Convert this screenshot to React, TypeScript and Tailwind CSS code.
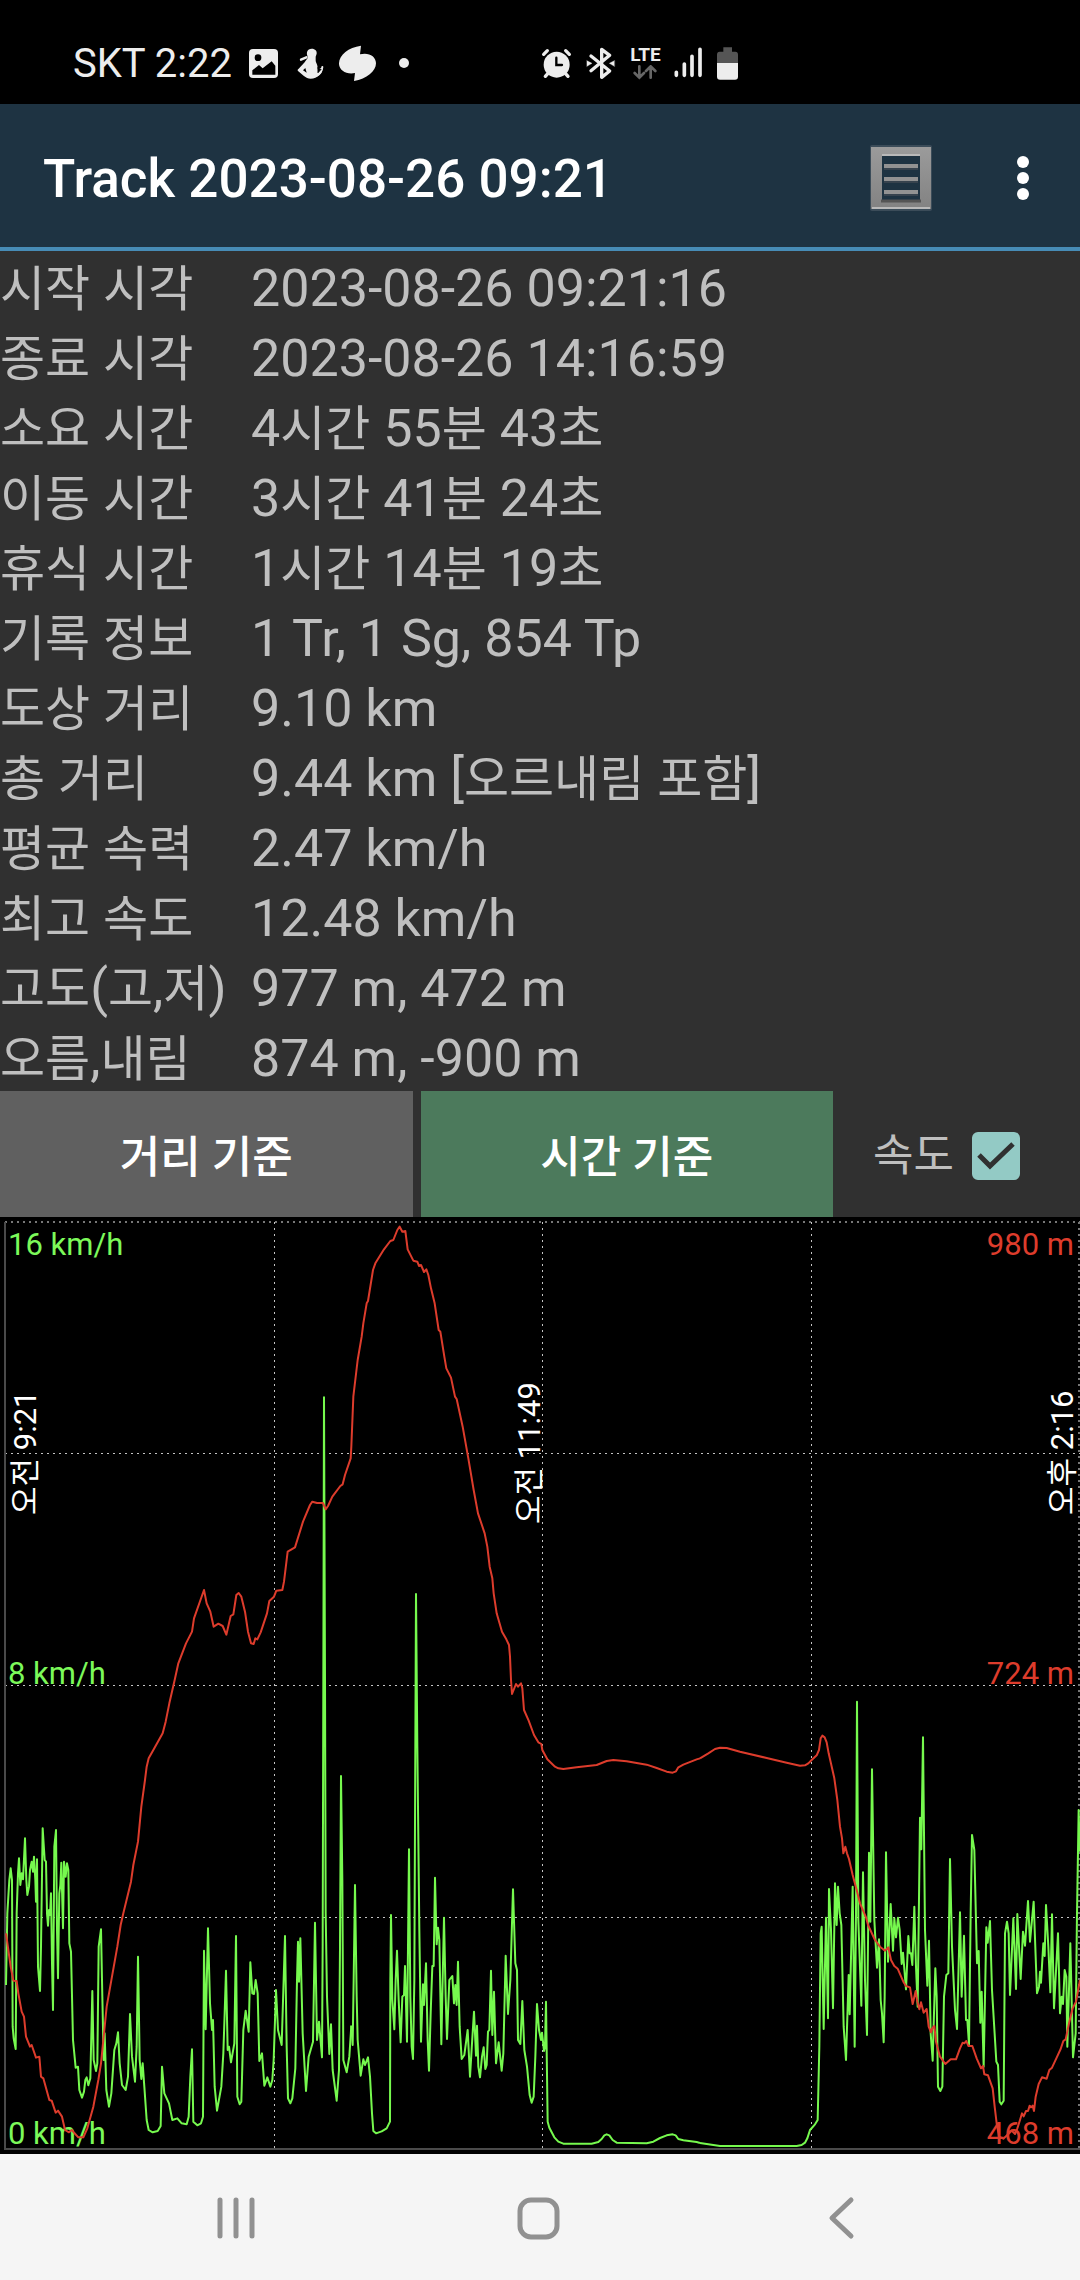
import { useState } from "react";

const stats: [string, string][] = [
    ["시작 시각", "2023-08-26 09:21:16"],
    ["종료 시각", "2023-08-26 14:16:59"],
    ["소요 시간", "4시간 55분 43초"],
    ["이동 시간", "3시간 41분 24초"],
    ["휴식 시간", "1시간 14분 19초"],
    ["기록 정보", "1 Tr, 1 Sg, 854 Tp"],
    ["도상 거리", "9.10 km"],
    ["총 거리", "9.44 km [오르내림 포함]"],
    ["평균 속력", "2.47 km/h"],
    ["최고 속도", "12.48 km/h"],
    ["고도(고,저)", "977 m, 472 m"],
    ["오름,내림", "874 m, -900 m"],
];

// Each stretch of a trace starts at its own x; units are a third of a pixel
const speed = [
    {
        x: 0,
        points:
            "18,915 22,700 28,600 32,565 36,600 38,1040 41,1075 47,1107 50,700 54,580 57,535 61,615 65,580 69,598 75,475 79,600 82,645 87,620 90,570 95,545 99,575 102,530 106,600 108,665 111,538 114,860 120,933 123,800 128,445 134,540 138,545 141,700 144,737 147,690 150,705 153,640 156,850 159,990 163,500 168,450 171,750 174,895 178,640 181,615 184,548 189,745 192,545 197,590 201,550 205,570 208,790 213,815 219,1080 227,1163 234,1160 238,1230 246,1253 252,1235 256,1200 260,1192 265,1216 271,1195 277,933 281,1140 288,1173 292,1150 296,800 303,748 307,950 311,1140 314,1060 319,1230 327,1280 334,1240 343,1110 349,1090 354,1057 359,1150 366,1215 377,1230 384,1190 390,1002 396,1130 405,1205 410,1100 414,830 419,1140 424,1197 428,1150 433,1220 440,1320 446,1350 458,1357 473,1353 482,1338 486,1160 493,1240 507,1270 517,1320 532,1315 545,1330 560,1333 566,1310 571,1190 576,1108 580,1325 592,1336 603,1330 609,1310 612,812 617,1048 624,745 630,970 636,1050 639,1020 644,1220 651,1292 664,1220 670,1120 674,1000 678,872 683,1110 687,1100 693,1147 703,1090 708,768 712,1250 719,1273 724,1265 730,1050 737,992 746,1055 751,847 757,940 762,942 767,900 773,940 778,1143 786,1120 793,1217 802,1192 811,1220 817,1200 821,1140 828,930 834,1050 845,1095 855,768 860,1100 864,1255 871,1270 877,1255 886,1165 891,900 894,785 897,905 901,775 908,1060 918,1233 926,1130 939,1085 945,728 951,1080 957,1025 966,1132 968,800 970,0 972,-848 975,0 977,700 981,950 988,1122 993,1033 998,1170 1010,1262 1017,1170 1020,800 1023,288 1027,600 1030,1140 1040,1177 1048,1130 1054,1037",
    },
    {
        x: 1050,
        points:
            "4,1037 8,1095 11,900 15,615 20,950 23,1080 32,1187 40,1138 45,1155 54,1132 60,1190 66,1300 70,1353 78,1360 95,1354 110,1345 120,1325 121,900 123,705 127,960 133,1048 137,900 141,812 146,960 152,1087 157,950 162,945 165,858 171,1085 174,800 177,508 181,950 185,1100 189,1137 193,900 196,200 198,-258 202,200 208,750 213,1085 219,913 222,975 228,850 233,1080 237,1172 242,1000 247,858 251,858 255,593 260,793 264,743 268,780 274,1093 279,850 282,713 287,950 291,1077 298,900 307,888 312,970 316,915 320,975 324,845 329,1040 335,1137 343,1125 353,1050 360,1190 366,1090 372,995 378,1127 381,1037 385,1160 390,1192 396,1130 401,1102 406,1167 410,1155 414,1055 418,1050 423,872 427,1065 432,935 438,1150 446,1087 455,1172 460,1120 467,827 474,1002 481,900 489,628 496,850 501,870 504,1080 511,1092 517,963 523,1110 531,1160 539,1245 545,1268 551,1250 556,1130 561,972 567,1050 573,1080 576,1058 582,1113 585,1100 588,965 593,1325 598,1343 613,1372 625,1385 640,1391 725,1391 745,1386 755,1377 763,1366 770,1363 778,1366 788,1380 800,1388 890,1390 910,1385 930,1374 950,1366 968,1363 977,1366 985,1377 1000,1381 1040,1386 1050,1389",
    },
    {
        x: 2100,
        points:
            "0,1389 60,1398 290,1398 305,1395 315,1388 322,1375 330,1350 345,1333 353,1320 358,1100 362,760 365,740 371,1047 378,713 384,1015 387,627 393,750 399,985 405,610 410,735 414,620 419,700 424,735 431,1040 438,1140 446,885 449,1003 458,620 464,1100 468,700 471,65 475,720 484,977 489,577 495,900 501,1065 507,518 511,725 516,268 523,720 531,863 537,778 542,960 546,1000 551,1087 554,950 558,517 564,845 572,672 579,812 583,715 588,772 594,713 599,750 605,852 609,818 618,928 625,768 629,820 633,820 637,855 643,680 648,860 653,980 660,413 664,508 669,172 675,750 682,917 687,782 692,1060 698,1142 702,1000 706,865 710,950 714,1220 721,1233 727,1220 732,950 739,885 745,880 750,537 756,800 765,990 771,1047 780,697 785,950 792,767 798,1020 802,1020 807,1093 812,700 816,465 823,510 831,850 836,813 841,1028 845,935 851,1160 859,742 863,788 870,723 876,930 889,1145 894,1155 899,1265 904,1273 911,1262 915,760 921,725 926,760 930,945 940,715 948,927 952,702 962,897 969,755 975,797 984,663 990,785 1001,665 1011,940 1017,920 1020,875 1023,908 1030,790 1034,828 1038,675 1045,800 1051,937 1056,703 1062,985 1074,760 1080,1000 1085,950 1089,972 1094,870 1099,890 1102,1100 1111,790 1119,1132 1127,1060 1131,700 1136,390 1139,515",
    },
];

const altitude = [
    {
        x: 0,
        points:
            "18,760 25,810 32,860 40,902 50,903 55,940 65,995 72,1010 78,1070 90,1100 95,1095 108,1133 118,1130 123,1190 130,1195 148,1260 155,1262 167,1298 174,1292 186,1310 195,1350 207,1357 215,1350 235,1372 250,1372 262,1345 280,1280 295,1200 303,1150 312,1060 320,980 335,895 352,800 362,735 370,700 393,605 400,555 414,485 424,380 435,300 440,260 446,235 460,210 488,160 497,125 508,70 524,0 535,-50 558,-110 576,-145 582,-185 612,-270 620,-230 631,-205 641,-160 655,-169 668,-162 679,-136 692,-192 700,-197 709,-255 716,-261 724,-250 735,-205 744,-145 753,-110 761,-108 766,-125 772,-122 782,-143 801,-200 808,-237 822,-250 829,-268 847,-270 852,-295 863,-385 885,-398 909,-475 930,-525 937,-535 951,-531 969,-531 977,-512 984,-522 997,-550 1021,-582 1028,-587 1035,-615 1052,-665 1054,-700 1060,-850 1073,-960 1085,-1030 1090,-1070 1100,-1130 1104,-1137 1119,-1230 1126,-1250 1152,-1292 1171,-1317 1180,-1320 1192,-1350 1199,-1360 1207,-1345 1216,-1347 1223,-1292 1240,-1258 1252,-1255 1257,-1242 1263,-1245 1272,-1224 1279,-1232 1285,-1215 1293,-1175 1304,-1130 1316,-1050 1321,-1045 1333,-970 1339,-935 1353,-907 1365,-850 1370,-843 1388,-760 1405,-665 1421,-570 1434,-500 1454,-440 1462,-400 1469,-340 1477,-305 1481,-260 1490,-200 1506,-145 1519,-122 1527,-105 1530,-70 1533,0",
    },
    {
        x: 1050,
        points:
            "483,0 486,42 498,12 504,20 513,10 517,25 522,90 536,122 552,165 565,187 574,192 577,210 592,238 615,260 625,265 640,267 680,262 740,255 755,249 770,243 790,240 830,244 890,254 920,264 950,275 968,278 978,274 985,262 1000,254 1040,238 1050,235",
    },
    {
        x: 2100,
        points:
            "0,235 25,220 45,207 60,203 80,204 120,215 200,234 260,248 300,257 315,256 325,250 335,240 350,226 357,210 362,175 367,167 374,172 380,187 386,220 403,295 412,360 420,440 426,475 430,520 436,500 441,520 447,537 458,585 470,630 480,670 498,712 504,735 525,780 540,800 555,812 565,802 573,840 583,858 593,866 610,905 618,918 630,922 638,972 647,933 652,965 658,988 663,967 671,998 680,987 686,1040 693,1057 697,1045 703,1038 708,1085 720,1130 736,1152 752,1138 768,1138 780,1105 788,1088 793,1090 799,1083 805,1098 817,1098 830,1135 843,1165 849,1158 853,1183 864,1186 878,1225 884,1280 890,1330 897,1370 910,1376 925,1362 935,1352 945,1362 952,1345 960,1320 966,1300 971,1309 978,1293 984,1293 989,1277 993,1282 998,1277 1002,1293 1007,1250 1016,1212 1026,1192 1040,1196 1048,1170 1056,1163 1070,1133 1082,1107 1090,1083 1097,1078 1107,1030 1118,985 1128,965 1140,900",
    },
];

// Hangul is set a little smaller than the digits beside it
function Mixed({ text }: { text: string }) {
    return (
        <>
            {text.split(/([가-힣]+)/).map((part, i) =>
                i % 2 ? (
                    <span key={i} className="text-[49px]">
                        {part}
                    </span>
                ) : (
                    part
                )
            )}
        </>
    );
}

function StatusBar() {
    return (
        <div className="flex h-[104px] items-center bg-black pt-[23px] pl-[73px] text-[#ededed]">
            <div className="flex items-center gap-3">
                <span className="text-[40px] leading-none whitespace-nowrap">SKT 2:22</span>
                <svg className="h-[37px] w-[39px]" viewBox="36 45 117 111">
                    <rect x="51" y="57" width="87" height="87" rx="12" fill="currentColor" />
                    <circle cx="78" cy="83" r="10" fill="#000" />
                    <path d="M61 134V121L81 105L92 115L119 94L130 107V134Z" fill="#000" />
                </svg>
                <svg className="h-[37px] w-8" viewBox="189 45 96 111" fill="none" stroke="currentColor" strokeLinecap="round">
                    <path d="M239 56c11 0 16 7 15 15l-3 9v11c0 9 7 12 6 27l13-5c5 14-14 33-34 33-15 0-26-14-38-23-2-3-1-5 2-7l18-19c3-7 8-9 9-14l-1-6c-3-9-1-21 13-21z" fill="currentColor" stroke="none" />
                    <path d="M207 89l16-7" strokeWidth="7" />
                    <path d="M271 111c-1 14-8 22-17 26" strokeWidth="6" />
                    <path d="M213 121l7-7 4 14z" fill="#000" stroke="none" />
                    <path d="M258 112v16l9-10" fill="#000" stroke="#000" strokeWidth="3" />
                </svg>
                <svg className="h-[37px] w-[37px]" viewBox="321 45 111 111" fill="currentColor">
                    <path d="M387 47C348 52 320 77 321 102c1 20 23 32 48 27l-3 24c38-5 66-30 66-53 0-22-23-34-48-27z" />
                </svg>
                <svg className="h-[37px] w-8" viewBox="468 45 96 111" fill="currentColor">
                    <circle cx="516" cy="99" r="15" />
                </svg>
            </div>
            <div className="ml-[121px] flex items-center gap-3">
                <svg className="h-[37px] w-[31px]" viewBox="57 45 93 111" fill="none" stroke="currentColor" strokeLinecap="round">
                    <circle cx="104" cy="104" r="39" fill="currentColor" stroke="none" />
                    <path d="M65 73l11-11M142 73l-11-11" strokeWidth="10" />
                    <path d="M78 130l-8 9M130 130l8 9" strokeWidth="10" />
                    <path d="M103 83v22h17" stroke="#000" strokeWidth="7" />
                </svg>
                <svg className="h-[37px] w-[33px]" viewBox="186 45 99 111" fill="none" stroke="currentColor" strokeWidth="10" strokeLinecap="round" strokeLinejoin="round">
                    <path d="M207 78l56 45-24 19V58l24 18-56 46" />
                    <path d="M195 92l15 8-15 9zM277 92l-15 8 15 9z" fill="currentColor" strokeWidth="1" />
                </svg>
                <div className="flex h-[37px] w-[33px] flex-col items-center">
                    <span className="text-[19px] leading-5 font-bold">LTE</span>
                    <svg className="h-[15px] w-[24px]" viewBox="0 0 72 45" fill="none" stroke="#666" strokeWidth="8" strokeLinecap="round">
                        <path d="M19 4v34M5 24l14 14 14-14M53 38V4M39 18L53 4l14 14" />
                    </svg>
                </div>
                <svg className="h-[37px] w-[29px]" viewBox="456 45 87 111" fill="none" stroke="currentColor" strokeWidth="11" strokeLinecap="round">
                    <path d="M463 127v9M487 102v34M510 79v57M534 58v78" />
                </svg>
                <svg className="h-[37px] w-[25px]" viewBox="579 45 75 111">
                    <path d="M604 52h26v13h10q8 0 8 9v26h-63V74q0-9 8-9h11z" fill="#555" />
                    <path d="M585 99h63v41q0 9-9 9h-45q-9 0-9-9z" fill="currentColor" />
                </svg>
            </div>
        </div>
    );
}

function Header() {
    return (
        <header className="flex h-[147px] items-center border-b-4 border-[#478cb6] bg-[#1e3342] pt-1 pr-[33px] pl-[43px]">
            <h1 className="flex-1 pt-1 text-[53px] leading-none font-medium whitespace-nowrap text-white">
                Track 2023-08-26 09:21
            </h1>
            <button type="button" aria-label="목록" className="mr-[66px]">
                <svg className="h-[68px] w-16" viewBox="0 0 64 68" fill="none">
                    <defs>
                        <linearGradient id="frame" x1="0" y1="0" x2="0" y2="1">
                            <stop offset="0" stopColor="#9b9b9b" />
                            <stop offset="1" stopColor="#828282" />
                        </linearGradient>
                    </defs>
                    <rect x="1" y="1" width="62" height="66" rx="2" fill="#3b4c59" />
                    <path d="M2 3h60v62H2zM13 12v44h38V12z" fill="url(#frame)" fillRule="evenodd" />
                    <path d="M13 12h38v44H13z" fill="#1e3342" />
                    <path d="M13 11h38M3 64h58" stroke="#b9b9b9" strokeWidth="2" />
                    <path d="M12 57h40" stroke="#555" strokeWidth="3" />
                    <path d="M15 22h34M15 35h34M15 48h34" stroke="#929292" strokeWidth="4" />
                    <path d="M15 25h34M15 38h34M15 51h34" stroke="#50555a" strokeWidth="1" />
                </svg>
            </button>
            <button type="button" aria-label="더보기">
                <svg className="h-12 w-12" viewBox="0 0 48 48" fill="#fff">
                    <circle cx="24" cy="8" r="6" />
                    <circle cx="24" cy="24" r="6" />
                    <circle cx="24" cy="40" r="6" />
                </svg>
            </button>
        </header>
    );
}

function Chart({ showSpeed }: { showSpeed: boolean }) {
    return (
        <svg className="block w-full bg-black" viewBox="0 0 1080 937" fontSize="31">
            {/* grid */}
            <g stroke="#c4c4c4" strokeWidth="1" strokeDasharray="2 4" fill="none">
                <path d="M5 5H1080" stroke="#777" strokeWidth="2" />
                <path d="M5 236.5H1080M5 468.5H1080M5 700.5H1080" />
                <path d="M274.5 5V932M542.5 5V932M811.5 5V932" />
                <path d="M1079 5V932" stroke="#777" strokeWidth="2" />
            </g>
            <path d="M5 5V932H1080" stroke="#4a4a4a" strokeWidth="2" fill="none" />

            {/* axis labels */}
            <g fill="#7cf95a">
                <text x="8" y="38">16 km/h</text>
                <text x="8" y="467">8 km/h</text>
                <text x="8" y="927">0 km/h</text>
            </g>
            <g fill="#fff">
                <text transform="translate(36 298) rotate(-90)">오전 9:21</text>
                <text transform="translate(540 307) rotate(-90)">오전 11:49</text>
                <text transform="translate(1073 298) rotate(-90)">오후 2:16</text>
            </g>

            {/* traces */}
            <svg width="1080" height="937" viewBox="0 -1389 3240 2811" fill="none" strokeLinejoin="round">
                {showSpeed && (
                    <g stroke="#76f94e" strokeWidth="6">
                        {speed.map((s) => (
                            <polyline key={s.x} points={s.points} transform={`translate(${s.x} 0)`} />
                        ))}
                    </g>
                )}
                <g stroke="#dd3c2c" strokeWidth="6">
                    {altitude.map((s) => (
                        <polyline key={s.x} points={s.points} transform={`translate(${s.x} 0)`} />
                    ))}
                </g>
            </svg>
            <g fill="#dd3c2c" textAnchor="end">
                <text x="1074" y="38">980 m</text>
                <text x="1074" y="467">724 m</text>
                <text x="1074" y="927">468 m</text>
            </g>
        </svg>
    );
}

function NavBar() {
    return (
        <nav className="grid h-[126px] grid-cols-3 bg-[#f5f5f5] pt-px pr-[88px] pl-[85px] text-[#919191]">
            <button type="button" aria-label="최근 앱" className="flex items-center justify-center">
                <svg className="h-12 w-12" viewBox="0 0 48 48" fill="none" stroke="currentColor" strokeWidth="5" strokeLinecap="round">
                    <path d="M8 6v36M24 6v36M40 6v36" />
                </svg>
            </button>
            <button type="button" aria-label="홈" className="flex items-center justify-center">
                <svg className="h-12 w-12" viewBox="0 0 48 48" fill="none" stroke="currentColor" strokeWidth="5">
                    <rect x="6" y="6" width="37" height="37" rx="11" />
                </svg>
            </button>
            <button type="button" aria-label="뒤로" className="flex items-center justify-center">
                <svg className="h-12 w-12" viewBox="0 0 48 48" fill="none" stroke="currentColor" strokeWidth="5" strokeLinecap="round" strokeLinejoin="round">
                    <path d="M34 6L15 24l19 18" />
                </svg>
            </button>
        </nav>
    );
}

export default function App() {
    const [showSpeed, setShowSpeed] = useState(true);
    const [byTime, setByTime] = useState(true);

    return (
        <div className="w-full overflow-hidden bg-[#303030] font-['Roboto','Noto_Sans_CJK_KR',sans-serif]">
            <StatusBar />
            <Header />

            <table className="w-full border-collapse text-[52px] leading-[70px] whitespace-nowrap text-[#bfbfbf]">
                <tbody>
                    {stats.map(([label, value]) => (
                        <tr key={label}>
                            <th scope="row" className="w-[251px] p-0 text-left font-normal">
                                <div className="h-[70px] pt-[3px]">
                                    <Mixed text={label} />
                                </div>
                            </th>
                            <td className="p-0">
                                <div className="h-[70px] pt-[3px]">
                                    <Mixed text={value} />
                                </div>
                            </td>
                        </tr>
                    ))}
                </tbody>
            </table>

            <div className="flex h-[126px] gap-2 text-[44px]">
                <button
                    type="button"
                    onClick={() => setByTime(false)}
                    className={`flex-1 pt-2 font-medium text-white ${byTime ? "bg-[#606060]" : "bg-[#4c7a5c]"}`}
                >
                    거리 기준
                </button>
                <button
                    type="button"
                    onClick={() => setByTime(true)}
                    className={`flex-1 pt-2 font-medium text-white ${byTime ? "bg-[#4c7a5c]" : "bg-[#606060]"}`}
                >
                    시간 기준
                </button>
                <label className="flex w-[239px] items-center gap-[18px] pt-1 pl-8 text-[#bfbfbf]">
                    속도
                    <span className="grid">
                        <input
                            type="checkbox"
                            checked={showSpeed}
                            onChange={(e) => setShowSpeed(e.target.checked)}
                            className="peer col-start-1 row-start-1 h-12 w-12 appearance-none rounded-md border-4 border-[#93cac5] checked:bg-[#93cac5]"
                        />
                        <svg
                            className="pointer-events-none invisible col-start-1 row-start-1 h-12 w-12 peer-checked:visible"
                            viewBox="0 0 48 48"
                            fill="none"
                            stroke="#303030"
                            strokeWidth="5"
                        >
                            <path d="M7 23l11 11L41 12" />
                        </svg>
                    </span>
                </label>
            </div>

            <Chart showSpeed={showSpeed} />
            <NavBar />
        </div>
    );
}
